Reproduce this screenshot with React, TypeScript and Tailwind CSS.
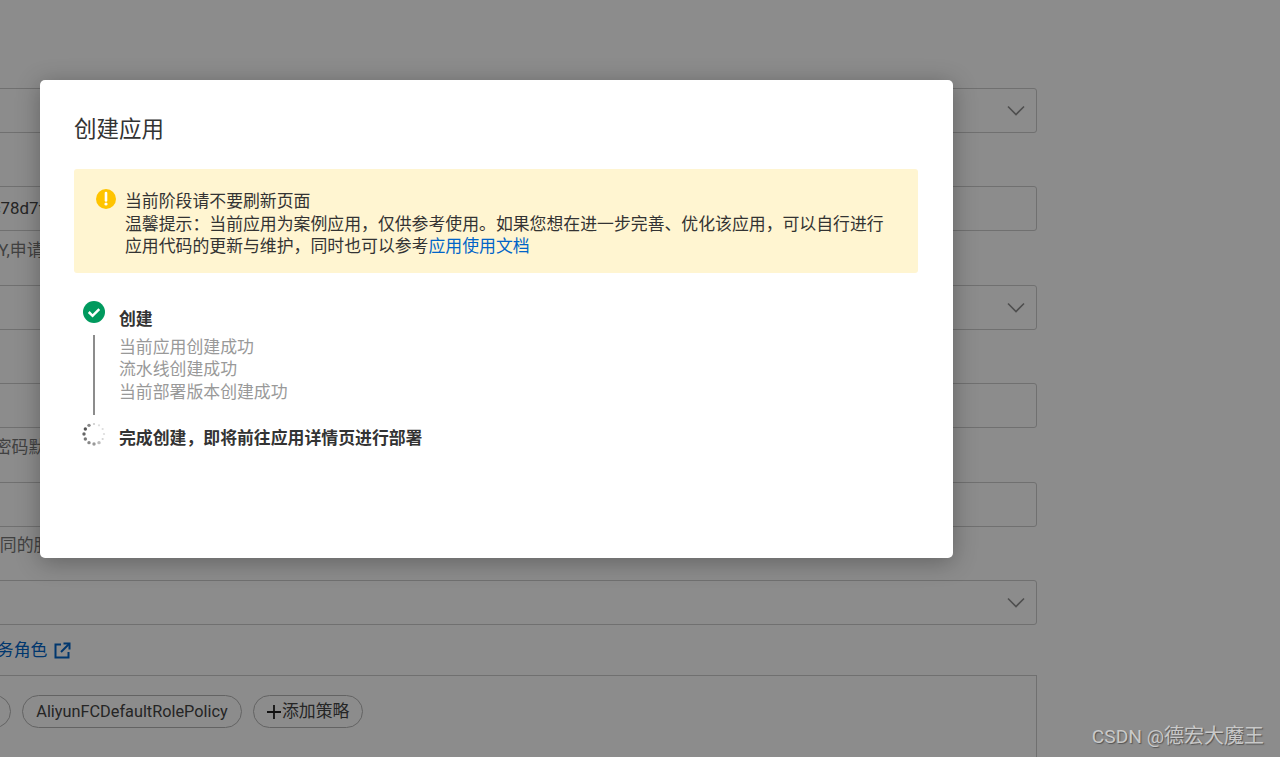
import React from "react";

const font = { fontFamily: 'Roboto, "Noto Sans CJK SC", "Noto Sans", sans-serif' };
const cjk = { fontFamily: '"Noto Sans CJK SC", "Noto Sans", sans-serif' };

function Chevron() {
  return (
    <svg width="18" height="11" viewBox="0 0 18 11" fill="none" className="shrink-0">
      <path d="M1 1.5L9 9.5L17 1.5" stroke="#8f8f8f" strokeWidth="1.6" />
    </svg>
  );
}

function Field({ select }: { select?: boolean }) {
  return (
    <div className="h-[45px] border border-[#cccccc] rounded-[3px] bg-white flex items-center justify-end pr-[11px]">
      {select && <Chevron />}
    </div>
  );
}

function Spinner() {
  const ops = [0.3, 0.2, 0.2, 0.2, 0.25, 0.4, 0.6, 0.7, 0.8, 0.9, 1, 0.7];
  return (
    <svg width="24" height="24" viewBox="0 0 24 24">
      {ops.map((op, i) => {
        const a = (i * 30 * Math.PI) / 180;
        const r = i >= 5 ? 1.7 : 1.1;
        return (
          <circle key={i} cx={12 + 10 * Math.sin(a)} cy={12 - 10 * Math.cos(a)} r={r} fill="#555" opacity={op} />
        );
      })}
    </svg>
  );
}

export default function App() {
  return (
    <div className="relative h-[757px] w-[1280px] overflow-hidden bg-white" style={font}>
      {/* page behind the dialog */}
      <div className="ml-[-40px] w-[1077px] pt-[88px] text-[16.875px] leading-[23px] text-[#666]">
        <Field select />
        <div className="h-[53px]" />
        <div className="h-[45px] border border-[#cccccc] rounded-[3px] flex items-center pl-[12px] text-[#444]">
          <span>a9c78d7f</span>
        </div>
        <div className="h-[54px] pt-[8px] pl-[18px] text-[#777]">KEY,申请中</div>
        <Field select />
        <div className="h-[53px]" />
        <Field />
        <div className="h-[54px] pt-[8px] pl-[1px] text-[#777]">用户密码默认</div>
        <Field />
        <div className="h-[53px] pt-[7px] pl-[23px] text-[#777]">相同的服务</div>
        <Field select />
        <div className="h-[50px] flex items-center gap-[7px] text-[#0064c8] pl-[20px]">
          <span>服务角色</span>
          <svg width="17" height="17" viewBox="0 0 17 17" fill="none">
            <path d="M7 2.5H1.5V15.5H14.5V10" stroke="#0064c8" strokeWidth="2" />
            <path d="M7 10L15 2" stroke="#0064c8" strokeWidth="2" />
            <path d="M9.5 1.5H15.5V7.5" stroke="#0064c8" strokeWidth="2" />
          </svg>
        </div>
        <div className="h-[120px] border border-[#cccccc] pt-[19px] pl-[2px] flex items-start gap-[11px]">
          <div className="h-[33px] w-[48px] border border-[#b5b5b5] rounded-full" />
          <div className="h-[33px] w-[220px] border border-[#b5b5b5] rounded-full flex items-center justify-center text-[16.3px] text-[#444]">
            AliyunFCDefaultRolePolicy
          </div>
          <div className="h-[33px] w-[110px] border border-[#b5b5b5] rounded-full flex items-center pl-[12px] text-[#444]">
            <svg width="16" height="16" viewBox="0 0 16 16">
              <path d="M8 1V15M1 8H15" stroke="#222" strokeWidth="1.8" />
            </svg>
            添加策略
          </div>
        </div>
      </div>

      {/* dim layer */}
      <div className="absolute inset-0 bg-black/45 pl-[40px] pt-[80px]">
        <div
          className="h-[478px] w-[913px] rounded-[5px] bg-white pl-[34px] pr-[35px] pt-[29px] shadow-[0_4px_24px_rgba(0,0,0,0.3)]"
          style={cjk}
        >
          <h2 className="h-[60px] text-[22.5px] leading-[36px] font-normal text-[#333]">创建应用</h2>
          <div className="flex h-[104px] gap-[9px] rounded-[3px] bg-[#fff5d1] pl-[22px] pr-[24px] pt-[20px] text-[16.875px] leading-[22.5px] text-[#333]">
            <svg width="20" height="20" viewBox="0 0 20 20" className="shrink-0">
              <circle cx="10" cy="10" r="10" fill="#ffc400" />
              <path d="M10 4V11.5" stroke="#fff" strokeWidth="2.6" strokeLinecap="round" />
              <circle cx="10" cy="15" r="1.6" fill="#fff" />
            </svg>
            <div>
              <div>当前阶段请不要刷新页面</div>
              <div>
                温馨提示：当前应用为案例应用，仅供参考使用。如果您想在进一步完善、优化该应用，可以自行进行应用代码的更新与维护，同时也可以参考
                <span className="text-[#0064c8]">应用使用文档</span>
              </div>
            </div>
          </div>

          <div className="flex pt-[28px] pl-[8px] gap-[14px]">
            <div className="flex w-[23px] shrink-0 flex-col items-center">
              <svg width="22" height="22" viewBox="0 0 23 23" className="ml-[1px] shrink-0">
                <circle cx="11.5" cy="11.5" r="11.5" fill="#009a5e" />
                <path d="M6 11.5L10 15.5L17 8.5" stroke="#fff" strokeWidth="2.6" fill="none" />
              </svg>
              <div className="mt-[12px] h-[80px] w-[2px] bg-[#8c8c8c]" />
              <div className="mt-[7px]">
                <Spinner />
              </div>
            </div>
            <div className="text-[16.875px] leading-[22.7px] pt-[6px]">
              <div className="font-bold text-[#333] mb-[5px]">创建</div>
              <div className="text-[#999]">当前应用创建成功</div>
              <div className="text-[#999]">流水线创建成功</div>
              <div className="text-[#999]">当前部署版本创建成功</div>
              <div className="font-bold text-[#333] mt-[23px]">完成创建，即将前往应用详情页进行部署</div>
            </div>
          </div>
        </div>
      </div>

      {/* watermark */}
      <div className="absolute right-[16px] bottom-[7px] text-[20px] leading-[26px] text-[#c9c9c9] [text-shadow:1px_1px_1px_rgba(60,60,60,0.7)]">
        <span className="text-[19.2px]">CSDN @</span>
        <span style={cjk}>德宏大魔王</span>
      </div>
    </div>
  );
}
